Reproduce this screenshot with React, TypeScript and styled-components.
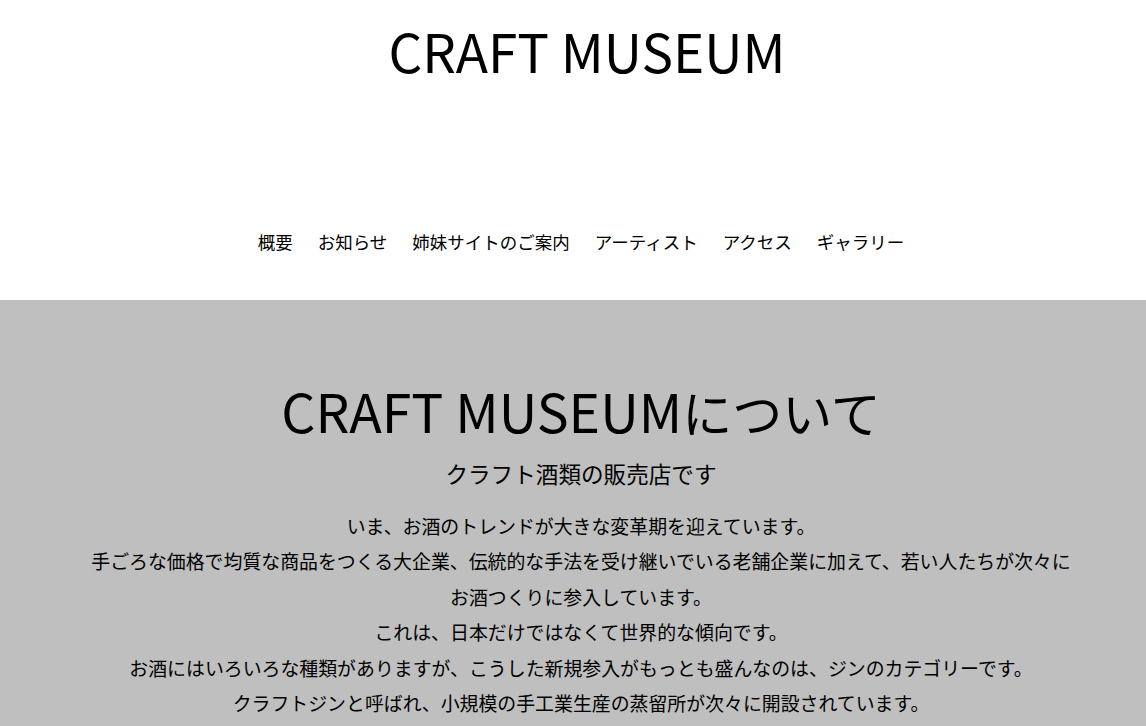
import React from "react";
import styled, { createGlobalStyle } from "styled-components";

const Global = createGlobalStyle`
  html, body { margin: 0; padding: 0; background: #ffffff; }
  body { font-family: "Noto Sans CJK JP", "Noto Sans", sans-serif; color: #000; }
`;

const Header = styled.header`
  box-sizing: border-box;
  background: #ffffff;
  height: 300px;
  padding-left: 16px;
  display: flex;
  flex-direction: column;
  align-items: center;
`;

const SiteTitle = styled.h1`
  margin: 18px 0 0 12px;
  font-size: 53px;
  font-weight: 400;
  line-height: 64px;
`;

const Nav = styled.nav`
  margin-top: 147px;
  display: flex;
  gap: 25px;
`;

const NavLink = styled.a`
  font-size: 17.5px;
  line-height: 26px;
  color: #000;
  text-decoration: none;
`;

const About = styled.section`
  box-sizing: border-box;
  background: #bfbfbf;
  min-height: 426px;
  padding: 78px 0 0 16px;
  display: flex;
  flex-direction: column;
  align-items: center;
`;

const Heading = styled.h2`
  margin: 0;
  font-size: 50px;
  font-weight: 400;
  line-height: 64px;
`;

const Latin = styled.span`
  font-size: 1.07em;
`;

const SubHeading = styled.h3`
  margin: 16px 0 0;
  font-size: 22.6px;
  font-weight: 400;
  line-height: 30px;
`;

const Body = styled.div`
  margin-top: 19px;
  width: 986px;
  text-align: center;
  font-size: 18.9px;
  line-height: 35.4px;
`;

const Para = styled.p`
  margin: 0;
`;

const links = ["概要", "お知らせ", "姉妹サイトのご案内", "アーティスト", "アクセス", "ギャラリー"];

const paragraphs = [
  "いま、お酒のトレンドが大きな変革期を迎えています。",
  "手ごろな価格で均質な商品をつくる大企業、伝統的な手法を受け継いでいる老舗企業に加えて、若い人たちが次々にお酒つくりに参入しています。",
  "これは、日本だけではなくて世界的な傾向です。",
  "お酒にはいろいろな種類がありますが、こうした新規参入がもっとも盛んなのは、ジンのカテゴリーです。",
  "クラフトジンと呼ばれ、小規模の手工業生産の蒸留所が次々に開設されています。",
];

export default function App() {
  return (
    <>
      <Global />
      <Header>
        <SiteTitle>CRAFT MUSEUM</SiteTitle>
        <Nav>
          {links.map((l) => (
            <NavLink key={l} href="#">{l}</NavLink>
          ))}
        </Nav>
      </Header>
      <About>
        <Heading>
          <Latin>CRAFT MUSEUM</Latin>について
        </Heading>
        <SubHeading>クラフト酒類の販売店です</SubHeading>
        <Body>
          {paragraphs.map((p) => (
            <Para key={p}>{p}</Para>
          ))}
        </Body>
      </About>
    </>
  );
}
